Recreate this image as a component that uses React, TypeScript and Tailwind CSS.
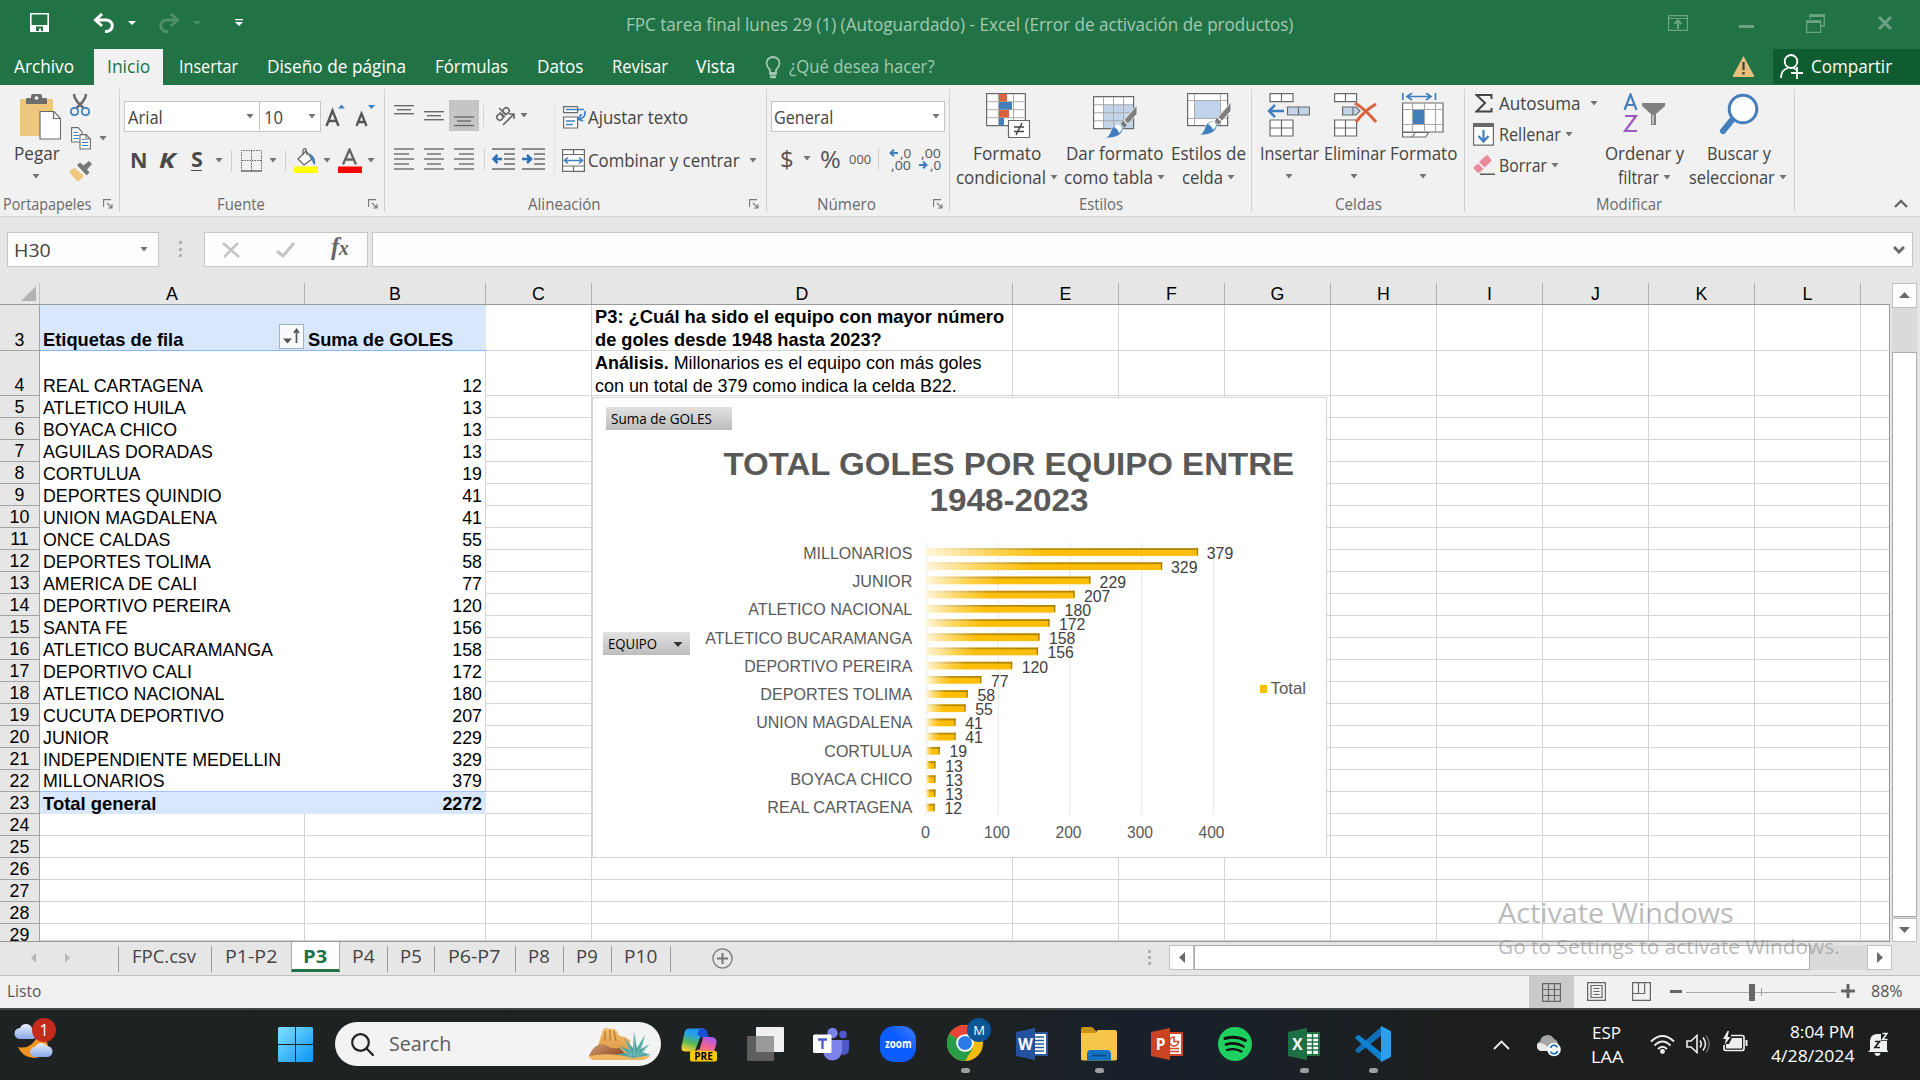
import { useLayoutEffect, useRef, useState } from "react";
import type { ReactNode } from "react";

/* Text condensed horizontally so that it fills the given width. */
function Fit({ w, className = "", children }: { w: number; className?: string; children: ReactNode }) {
  const ref = useRef<HTMLSpanElement>(null);
  const [k, setK] = useState(1);
  useLayoutEffect(() => {
    if (ref.current) setK((w + 1) / ref.current.offsetWidth);
  }, [w]);
  return (
    <span className={`inline-block shrink-0 whitespace-nowrap ${className}`} style={{ width: w }}>
      <span ref={ref} className="inline-block origin-left" style={{ transform: `scaleX(${k})` }}>
        {children}
      </span>
    </span>
  );
}

function Caret({ className = "" }: { className?: string }) {
  return (
    <svg className={`h-[5px] w-[8px] shrink-0 fill-[#737373] ${className}`} viewBox="0 0 8 5">
      <path d="M.5 0h7L4 4.400z" />
    </svg>
  );
}

function Sep({ className = "" }: { className?: string }) {
  return <div className={`w-px shrink-0 bg-[#d2d2d2] ${className}`} />;
}

function TabSep({ className = "" }: { className?: string }) {
  return <div className={`mt-[4px] h-[26px] w-px shrink-0 bg-[#9b9b9b] ${className}`} />;
}

function Launcher({ className = "" }: { className?: string }) {
  return (
    <svg className={`h-[10px] w-[10px] shrink-0 ${className}`} viewBox="0 0 10 10" fill="none" stroke="#777" strokeWidth="1.1">
      <path d="M.6 8V.6H8M4 4l4.500 4.500M9 5v4H5" />
    </svg>
  );
}

/* ---------- title bar and tabs ---------- */

function TitleBar() {
  return (
    <div className="flex h-[49px] shrink-0 bg-[#217346]">
      <div className="flex w-[626px] shrink-0">
        <svg className="ml-[30px] mt-[13px] h-[19px] w-[19px]" viewBox="0 0 19 19" fill="none" stroke="#fff" strokeWidth="1.6">
          <path d="M.8.8h17.400v17.400H.8z" />
          <path d="M1 12h17v6H1z" fill="#fff" stroke="none" />
          <path d="M6 13.500h7V18h-2v-2.500H9V18H6z" fill="#217346" stroke="none" />
        </svg>
        <svg className="ml-[44px] mt-[13px] h-[20px] w-[22px]" viewBox="0 0 22 20" fill="none" stroke="#fff" strokeWidth="3">
          <path d="M2 7h11a6 5.500 0 0 1 0 11.500h-1M9 1 2.500 7 9 13" />
        </svg>
        <svg className="ml-[13px] mt-[21px] h-[4px] w-[8px] fill-white" viewBox="0 0 8 4"><path d="M0 0h8L4 4z" /></svg>
        <svg className="ml-[22px] mt-[13px] h-[20px] w-[22px]" viewBox="0 0 22 20" fill="none" stroke="#4d906b" strokeWidth="3">
          <path d="M20 7H9a6 5.500 0 0 0 0 11.500h1M13 1l6.500 6L13 13" />
        </svg>
        <svg className="ml-[13px] mt-[21px] h-[4px] w-[8px] fill-[#4d906b]" viewBox="0 0 8 4"><path d="M0 0h8L4 4z" /></svg>
        <svg className="ml-[34px] mt-[19px] h-[7px] w-[8px] fill-white" viewBox="0 0 8 7"><path d="M0 0h8v1.200H0zM0 3h8L4 7z" /></svg>
      </div>
      <Fit w={666} className="text-[17.5px] leading-[48px] text-[#a3c9b2]">
        FPC tarea final lunes 29 (1) (Autoguardado) - Excel (Error de activación de productos)
      </Fit>
      <svg className="ml-[376px] mt-[15px] h-[16px] w-[20px]" viewBox="0 0 20 16" fill="none" stroke="#6ba384" strokeWidth="1.2">
        <path d="M.6.6h18.800v14.800H.6zM.6 3.500h18.800" /><path d="M10 14V6M6.500 9 10 5.500 13.500 9" strokeWidth="2" />
      </svg>
      <div className="ml-[51px] mt-[25px] h-[3px] w-[15px] bg-[#6ba384]" />
      <svg className="ml-[52px] mt-[14px] h-[19px] w-[19px]" viewBox="0 0 19 19" fill="none" stroke="#6ba384" strokeWidth="1.3">
        <path d="M4 5V1h14.300v11H15M.7 7h14v11.300H.7z" /><path d="M4 1.800h14.500M.7 7.700h14" strokeWidth="2.400" />
      </svg>
      <svg className="ml-[53px] mt-[16px] h-[14px] w-[14px]" viewBox="0 0 14 14" stroke="#6ba384" strokeWidth="3">
        <path d="m1 1 12 12M13 1 1 13" />
      </svg>
    </div>
  );
}

function Tabs() {
  const t = "text-[17.5px] leading-[35px] text-white";
  return (
    <div className="flex h-[36px] shrink-0 bg-[#217346]">
      <Fit w={59} className={`${t} ml-[14px]`}>Archivo</Fit>
      <div className="ml-[21px] w-[69px] bg-[#f1f1f1] pl-[13px] text-[17.5px] leading-[35px] text-[#217346]">
        <Fit w={42}>Inicio</Fit>
      </div>
      <Fit w={58} className={`${t} ml-[16px]`}>Insertar</Fit>
      <Fit w={138} className={`${t} ml-[30px]`}>Diseño de página</Fit>
      <Fit w={72} className={`${t} ml-[30px]`}>Fórmulas</Fit>
      <Fit w={46} className={`${t} ml-[30px]`}>Datos</Fit>
      <Fit w={55} className={`${t} ml-[29px]`}>Revisar</Fit>
      <Fit w={38} className={`${t} ml-[29px]`}>Vista</Fit>
      <svg className="ml-[31px] mt-[7px] h-[23px] w-[16px]" viewBox="0 0 16 23" fill="none" stroke="#a3c9b2" strokeWidth="1.8">
        <path d="M5 17v-3C3.500 12 1.500 10.500 1.500 7a6.500 6 0 0 1 13 0c0 3.500-2 5-3.500 7v3z" /><path d="M4.500 18h7M5 21h6" strokeWidth="2.500" />
      </svg>
      <Fit w={145} className="ml-[8px] text-[17.5px] leading-[35px] text-[#a3c9b2]">¿Qué desea hacer?</Fit>
      <svg className="ml-[798px] mt-[6px] h-[23px] w-[23px]" viewBox="0 0 23 23">
        <path d="M11.500 1 22 20.500q.5 1.500-1 1.500H2q-1.500 0-1-1.500z" fill="#e9bf7c" /><path d="M11.500 7v8M11.500 17v2.500" stroke="#444" strokeWidth="2.300" />
      </svg>
      <div className="ml-[18px] flex h-[35px] flex-1 bg-[#0e5c2f]">
        <svg className="ml-[7px] mt-[5px] h-[25px] w-[23px]" viewBox="0 0 23 25" fill="none" stroke="#fff" strokeWidth="1.8">
          <ellipse cx="11" cy="7.500" rx="6.300" ry="6.500" /><path d="M1 24c0-6 3-9 7-10M13 14q2 .5 3 2M11 19h12M17 13v12" />
        </svg>
        <Fit w={80} className={`${t} ml-[8px]`}>Compartir</Fit>
      </div>
    </div>
  );
}

/* ---------- ribbon ---------- */

const label = "text-[15.5px] leading-[20px] text-[#6a6a6a]";
const txt = "text-[17.5px] leading-[24px] text-[#444]";

function Lines({ ws, ys, className = "" }: { ws: number[][]; ys: number[]; className?: string }) {
  return (
    <svg className={`h-[22px] w-[21px] shrink-0 ${className}`} viewBox="0 0 21 22" stroke="#6a6a6a" strokeWidth="1.400">
      {ys.map((y, i) => (
        <path key={y} d={`M${ws[i % ws.length][0]} ${y}H${ws[i % ws.length][1]}`} />
      ))}
    </svg>
  );
}

function Clipboard() {
  return (
    <div className="flex w-[119px] shrink-0 flex-col">
      <div className="flex h-[109px]">
        <div className="flex w-[64px] flex-col">
          <svg className="ml-[20px] mt-[9px] h-[46px] w-[41px] shrink-0" viewBox="0 0 41 46">
            <rect x="0" y="5" width="33" height="37" rx="1" fill="#eec67e" />
            <path d="M6 10V5q0-1 1-1h4V2q0-2 2-2h7q2 0 2 2v2h4q1 0 1 1v5z" fill="#6d6d6d" /><circle cx="16.500" cy="4" r="1.800" fill="#fff" />
            <path d="M20 17.500h14l6.500 7V45H20z" fill="#fff" stroke="#6a6a6a" strokeWidth="1.200" /><path d="M33.500 17.500v7h7" fill="none" stroke="#6a6a6a" strokeWidth="1.200" />
          </svg>
          <Fit w={45} className={`${txt} ml-[14px] mt-[1px]`}>Pegar</Fit>
          <Caret className="ml-[32px] mt-[9px]" />
        </div>
        <div className="flex flex-col pl-[5px]">
          <svg className="ml-[1px] mt-[9px] h-[23px] w-[20px]" viewBox="0 0 20 23" fill="none">
            <path d="M4 0c0 5 4 9 9.500 14M16 0c0 5-4 9-9.500 14" stroke="#6a6a6a" strokeWidth="2.400" />
            <circle cx="4.500" cy="17.500" r="3.700" stroke="#3f7fbf" strokeWidth="1.800" /><circle cx="15.500" cy="17.500" r="3.700" stroke="#3f7fbf" strokeWidth="1.800" />
          </svg>
          <div className="mt-[10px] flex items-center">
            <svg className="ml-[2px] h-[23px] w-[20px]" viewBox="0 0 20 23" fill="#fff" stroke="#6a6a6a" strokeWidth="1.100">
              <path d="M.6.600h6.500L11 5v10H.6z" /><path d="M2.500 5.500H7M2.500 8.500H8M2.500 11.500H8" stroke="#3f7fbf" />
              <path d="M9 7.600h6l4.400 4.400v10H9z" /><path d="M15 7.600V12h4.400" fill="none" /><path d="M11 12.500h3M11 15.500h6.500M11 18.500h6.500" stroke="#3f7fbf" />
            </svg>
            <Caret className="ml-[8px]" />
          </div>
          <svg className="mt-[11px] h-[21px] w-[23px]" viewBox="0 0 23 21">
            <path d="m0 10 5.500-3L15 15l-5.500 5.500Q4 17 0 10z" fill="#eec67e" /><path d="m8 4 3-2.500 3.500 3L20 0l3 3-5 5.500 2.500 3-3 3z" fill="#777" /><path d="m6.500 5.500 10 9" stroke="#f1f1f1" strokeWidth="1.300" />
          </svg>
        </div>
      </div>
      <div className="flex items-center pl-[3px]">
        <Fit w={87} className={label}>Portapapeles</Fit>
        <Launcher className="ml-[13px]" />
      </div>
    </div>
  );
}

const combo = "flex h-[31px] shrink-0 items-center border border-[#c6c6c6] bg-white text-[17.5px] text-[#444]";

function FontGroup() {
  return (
    <div className="flex w-[264px] shrink-0 flex-col">
      <div className="mt-[16px] flex h-[31px] pl-[4px]">
        <div className={`${combo} w-[136px] pl-[3px]`}><Fit w={34} className="pt-[2px]">Arial</Fit><Caret className="ml-[84px]" /></div>
        <div className={`${combo} -ml-px w-[62px] pl-[4px]`}><Fit w={18} className="pt-[2px]">10</Fit><Caret className="ml-[26px]" /></div>
        <svg className="ml-[4px] mt-[3px] h-[24px] w-[22px]" viewBox="0 0 22 24"><path d="M13 4.500 16.500.5 20 4.500z" fill="#3f7fbf" />
          <path d="m1.500 22 6-15.500 6 15.500M3.500 17h8" fill="none" stroke="#555" strokeWidth="2.400" /></svg>
        <svg className="ml-[8px] mt-[3px] h-[24px] w-[22px]" viewBox="0 0 22 24"><path d="M13 1 16.500 5 20 1z" fill="#3f7fbf" />
          <path d="m1.500 22 5-12.500 5 12.500M3.500 18h6" fill="none" stroke="#555" strokeWidth="2.300" /></svg>
      </div>
      <div className="mt-[10px] flex h-[37px] items-center text-[21.500px] font-bold leading-[30px] text-[#4a4a4a]">
        <Fit w={16} className="-mt-[2px] ml-[10px]">N</Fit>
        <Fit w={15} className="-mt-[2px] ml-[13px] italic">K</Fit>
        <div className="-mt-[2px] ml-[17px] flex h-[22px] items-center border-b-[1.500px] border-[#4a4a4a]"><Fit w={11}>S</Fit></div>
        <Caret className="ml-[13px]" />
        <Sep className="ml-[8px] h-[22px]" />
        <svg className="ml-[9px] h-[22px] w-[21px]" viewBox="0 0 21 22" fill="none" stroke="#666"><path d="M.5 21V.5h20V21M10.500 1v20M1 10.500h19" strokeDasharray="1.500 1" /><path d="M0 21h21" strokeWidth="1.500" /></svg>
        <Caret className="ml-[7px]" />
        <Sep className="ml-[8px] h-[22px]" />
        <svg className="ml-[8px] h-[25px] w-[24px]" viewBox="0 0 24 25"><path d="m4 11 8-8 6 8-8 6z" fill="#fff" stroke="#666" strokeWidth="1.300" /><path d="M9 7V3q0-3 3-2l1 6" fill="none" stroke="#666" strokeWidth="1.300" /><path d="M15 5q7 3 6 12-3-2-3-6z" fill="#3f7fbf" /><path d="M0 18.500h24V25H0z" fill="#ff0" /></svg>
        <Caret className="ml-[5px]" />
        <svg className="ml-[7px] h-[25px] w-[24px]" viewBox="0 0 24 25"><path d="m5 16.500 6.500-15 6.500 15M7 11.500h9" fill="none" stroke="#666" strokeWidth="2.300" /><path d="M0 18.500h24V25H0z" fill="red" /></svg>
        <Caret className="ml-[5px]" />
      </div>
      <div className="mt-[15px] flex items-center pl-[97px]">
        <Fit w={47} className={label}>Fuente</Fit>
        <Launcher className="ml-[104px]" />
      </div>
    </div>
  );
}

function AlignGroup() {
  return (
    <div className="flex w-[381px] shrink-0 flex-col">
      <div className="flex h-[109px]">
        <div className="flex w-[169px] flex-col">
          <div className="mt-[15px] flex h-[31px] items-center">
            <Lines className="ml-[9px]" ws={[[0, 20], [3, 17]]} ys={[0.7, 4.700, 8.700]} />
            <Lines className="ml-[9px]" ws={[[0, 20], [3, 17]]} ys={[6.700, 10.700, 14.700]} />
            <div className="ml-[4px] flex h-[31px] w-[30px] items-center bg-[#c5c5c5] pl-[5px]">
              <Lines ws={[[0, 20], [3, 17]]} ys={[12, 16, 20.500]} />
            </div>
            <Sep className="ml-[4px] h-[22px]" />
            <svg className="ml-[11px] h-[20px] w-[20px]" viewBox="0 0 20 20" fill="none" stroke="#666" strokeWidth="1.600">
              <g transform="rotate(-45 8 8)"><circle cx="3.500" cy="8" r="3" /><path d="M7 4.500v7M9.500 1v10" /><circle cx="12.500" cy="8" r="3" /></g>
              <path d="m8 19 10.500-10.500M14 8h5v5" />
            </svg>
            <Caret className="ml-[5px]" />
          </div>
          <div className="mt-[17px] flex h-[22px] items-center">
            <Lines className="ml-[9px]" ws={[[0, 20], [0, 15]]} ys={[1, 6, 11, 16, 21]} />
            <Lines className="ml-[9px]" ws={[[0, 20], [3, 17]]} ys={[1, 6, 11, 16, 21]} />
            <Lines className="ml-[9px]" ws={[[0, 20], [5, 20]]} ys={[1, 6, 11, 16, 21]} />
            <Sep className="ml-[9px] h-[22px]" />
            <svg className="ml-[7px] h-[22px] w-[23px]" viewBox="0 0 23 22" stroke="#6a6a6a" strokeWidth="1.300" fill="none"><path d="M0 1h23M12 6h11M12 11h11M12 16h11M0 21h23" /><path d="M10 11H2M5.500 7 1.500 11l4 4" stroke="#2f6fb5" strokeWidth="2.600" /></svg>
            <svg className="ml-[7px] h-[22px] w-[23px]" viewBox="0 0 23 22" stroke="#6a6a6a" strokeWidth="1.300" fill="none"><path d="M0 1h23M12 6h11M12 11h11M12 16h11M0 21h23" /><path d="M0 11h8M5 7l4 4-4 4" stroke="#2f6fb5" strokeWidth="2.600" /></svg>
          </div>
        </div>
        <div className="mt-[17px] h-[73px] w-px bg-[#e2e2e2]" />
        <div className="flex flex-col">
          <div className="mt-[20px] flex h-[24px] items-center">
            <svg className="ml-[8px] h-[23px] w-[24px]" viewBox="0 0 24 23" fill="none" stroke="#6a6a6a" strokeWidth="1.200"><path d="M.6.600h14v6H.6zM.6 11h14v11H.6z" fill="#fff" /><path d="M3 3.500h18M3 15h9M3 18.500h7" stroke="#3f7fbf" strokeWidth="1.500" /><path d="M22 5q1 7-6 8M18.500 8 15 13l5 2" stroke="#3f7fbf" strokeWidth="1.800" /></svg>
            <Fit w={99} className={`${txt} -mt-px ml-px`}>Ajustar texto</Fit>
          </div>
          <div className="mt-[19px] flex h-[24px] items-center">
            <svg className="ml-[7px] h-[23px] w-[23px]" viewBox="0 0 23 23" fill="#fff" stroke="#6a6a6a" strokeWidth="1.200"><path d="M.6.600h21.800v21.800H.6zM.6 5.500h21.800M.6 17h21.800M11.500.6v5M11.500 17v5" /><path d="M3 11.500h17M6 8.500l-3.500 3 3.500 3M17 8.500l3.500 3-3.500 3" fill="none" stroke="#3f7fbf" strokeWidth="1.600" /></svg>
            <Fit w={151} className={`${txt} ml-[3px]`}>Combinar y centrar</Fit>
            <Caret className="ml-[10px]" />
          </div>
        </div>
      </div>
      <div className="flex items-center pl-[143px]">
        <Fit w={72} className={label}>Alineación</Fit>
        <Launcher className="ml-[149px]" />
      </div>
    </div>
  );
}

function NumberGroup() {
  return (
    <div className="flex w-[182px] shrink-0 flex-col">
      <div className="mt-[16px] flex pl-[4px]">
        <div className={`${combo} w-[174px] pl-[2px]`}><Fit w={58} className="pt-[2px]">General</Fit><Caret className="ml-[100px]" /></div>
      </div>
      <div className="mt-[11px] flex h-[31px] items-center text-[#555]">
        <Fit w={13} className="ml-[13px] text-[24px] leading-[30px]">$</Fit>
        <Caret className="ml-[10px]" />
        <Fit w={20} className="ml-[9px] text-[24px] leading-[30px]">%</Fit>
        <Fit w={21} className="ml-[9px] text-[13.500px] leading-[28px]">000</Fit>
        <Sep className="ml-[8px] h-[22px]" />
        <div className="ml-[8px] flex w-[23px] flex-col items-end text-[13.500px] leading-[12px]">
          <div className="flex items-center"><svg className="mr-[2px] h-[8px] w-[9px]" viewBox="0 0 9 8" fill="none" stroke="#3f7fbf" strokeWidth="2"><path d="M9 4H2M5 .7 1.500 4 5 7.300" /></svg><Fit w={10}>,0</Fit></div>
          <Fit w={19}>,00</Fit>
        </div>
        <div className="ml-[7px] flex w-[23px] flex-col items-end text-[13.500px] leading-[12px]">
          <Fit w={19}>,00</Fit>
          <div className="flex items-center"><svg className="mr-[2px] h-[8px] w-[9px]" viewBox="0 0 9 8" fill="none" stroke="#3f7fbf" strokeWidth="2"><path d="M0 4h7M4 .7 7.500 4 4 7.300" /></svg><Fit w={10}>,0</Fit></div>
        </div>
      </div>
      <div className="mt-[20px] flex items-center pl-[50px]">
        <Fit w={58} className={label}>Número</Fit>
        <Launcher className="ml-[58px]" />
      </div>
    </div>
  );
}

function Big({ box, icon, a, aw, b, bw }: { box: string; icon: ReactNode; a: string; aw: number; b?: string; bw?: number }) {
  return (
    <div className={`flex shrink-0 flex-col items-center ${box}`}>
      <div className="mt-[8px] flex h-[48px] items-start">{icon}</div>
      <Fit w={aw} className={txt}>{a}</Fit>
      <div className="flex h-[24px] items-center gap-[5px]">
        {b && <Fit w={bw || 0} className={txt}>{b}</Fit>}
        <Caret className={b ? "" : "mb-[2px]"} />
      </div>
    </div>
  );
}

const Brush = () => (
  <>
    <path d="M44 9v9l-9 10-4-4z" fill="#808080" stroke="#f1f1f1" /><path d="m30 25 4 4-3 3-4-3z" fill="#777" />
    <path d="M12 42c5-2 5-6 7-10 3-5 10-5 11-1 1 6-6 12-18 11z" fill="#3f7fbf" stroke="#f1f1f1" strokeWidth=".8" /><path d="M21 31c3-4 8-3 8 1q0 3-3 5-1-4-5-6z" fill="#fff" />
  </>
);

function StylesGroup() {
  return (
    <div className="flex w-[301px] shrink-0 flex-col">
      <div className="flex h-[109px] pl-[2px]">
        <Big box="w-[109px]" a="Formato" aw={67} b="condicional" bw={89} icon={
          <svg className="ml-[4px] h-[46px] w-[45px]" viewBox="0 0 45 46" fill="none">
            <path d="M.6.600h38.800v32H.6z" fill="#fff" stroke="#6a6a6a" strokeWidth="1.200" />
            <path d="M1 8.700h38M1 16.700h38M1 24.700h38M12.500 1v31M27.500 1v31" stroke="#aaa" />
            <path d="M13 1h8v7.500h-8zM13 17h10v7.500H13z" fill="#d9623f" /><path d="M13 9h13v7.500H13zM13 25h5v7.500h-5z" fill="#457fbb" />
            <path d="M22.500 27.500h21v17h-21z" fill="#fff" stroke="#6a6a6a" strokeWidth="1.200" /><path d="M28 34h10M28 38.500h10M36 30l-6 12" stroke="#444" strokeWidth="1.500" />
          </svg>} />
        <Big box="w-[106px]" a="Dar formato" aw={96} b="como tabla" bw={88} icon={
          <svg className="ml-[3px] mt-[3px] h-[44px] w-[45px]" viewBox="0 0 45 44" fill="none">
            <path d="M.6.600h40v32H.6z" fill="#fff" stroke="#6a6a6a" strokeWidth="1.200" /><path d="M11 9h29v23H11z" fill="#c1d4ea" />
            <path d="M1 8.700h39M1 16.700h39M1 24.700h39M10.500 1v31M20.500 1v31M30.500 1v31" stroke="#aaa" /><Brush />
          </svg>} />
        <Big box="w-[82px]" a="Estilos de" aw={74} b="celda" bw={40} icon={
          <svg className="ml-[2px] h-[44px] w-[45px]" viewBox="0 0 45 44" fill="none">
            <path d="M.6.600h40v32H.6z" fill="#fff" stroke="#6a6a6a" strokeWidth="1.200" />
            <path d="M1 7.500h39M1 25.500h39M7.500 1v31M33.500 1v31" stroke="#aaa" /><path d="M8 8h25v17H8z" fill="#bfd3ea" /><Brush />
          </svg>} />
      </div>
      <Fit w={43} className={`${label} ml-[129px]`}>Estilos</Fit>
    </div>
  );
}

function CellsGroup() {
  return (
    <div className="flex w-[212px] shrink-0 flex-col">
      <div className="flex h-[109px] pl-[4px]">
        <Big box="w-[65px]" a="Insertar" aw={58} icon={
          <svg className="h-[45px] w-[43px]" viewBox="0 0 43 45" fill="#fff" stroke="#6a6a6a" strokeWidth="1.200">
            <path d="M3 .6h23v8H3zM14.500.6v8M3 27h23v16H3zM3 35h23M14.500 27v16" /><path d="M20.500 14h22v8h-22zM31.500 14v8" fill="#c1d4ea" />
            <path d="M17 18H2M8 12l-6 6 6 6" fill="none" stroke="#3f7fbf" strokeWidth="2.500" />
          </svg>} />
        <Big box="w-[66px]" a="Eliminar" aw={61} icon={
          <svg className="ml-[2px] h-[45px] w-[43px]" viewBox="0 0 43 45" fill="#fff" stroke="#6a6a6a" strokeWidth="1.200">
            <path d="M.6.600h22v8H.6zM11.500.6v8M.6 27h22v16H.6zM.6 35h22M11.500 27v16" /><path d="M8.600 14H22l4 4-4 4H8.600zM19 14v8" fill="#c1d4ea" />
            <path d="M21 10q10 6 21 19M42 11Q30 18 22 29" fill="none" stroke="#d9623f" strokeWidth="3" />
          </svg>} />
        <Big box="w-[72px]" a="Formato" aw={66} icon={
          <svg className="h-[45px] w-[42px]" viewBox="0 0 42 45" fill="#fff" stroke="#6a6a6a" strokeWidth="1.200">
            <path d="M.6 10h40.400v29H.6zM.6 39.500h26l-3 4.500H.6zM10 44l3-4" /><path d="M1 16.500h40M1 31.500h40M10.500 10v29M22.500 10v29M33.500 10v29" stroke="#aaa" />
            <path d="M11 17h11v14H11z" fill="#457fbb" stroke="none" /><path d="M.8 0v7M33.500 0v7M5 3.500h24M10 0 5 3.500 10 7M24 0l5 3.500L24 7" fill="none" stroke="#3f7fbf" strokeWidth="1.700" />
          </svg>} />
      </div>
      <Fit w={46} className={`${label} ml-[83px]`}>Celdas</Fit>
    </div>
  );
}

function EditGroup() {
  return (
    <div className="flex w-[329px] shrink-0 flex-col">
      <div className="flex h-[109px]">
        <div className="flex w-[137px] flex-col pl-[7px] pt-[6px]">
          <div className="flex h-[24px] items-center">
            <svg className="ml-[3px] h-[19px] w-[18px]" viewBox="0 0 18 19" fill="none" stroke="#444" strokeWidth="2"><path d="M16.500 5V1H1.500L10 9 1.500 17.500H16.500V14" /></svg>
            <Fit w={81} className={`${txt} ml-[6px]`}>Autosuma</Fit><Caret className="ml-[10px]" />
          </div>
          <div className="mt-[7px] flex h-[24px] items-center">
            <svg className="ml-[1px] h-[23px] w-[21px]" viewBox="0 0 21 23" fill="none"><path d="M.6.600h19.800v21.500H.6z" fill="#fff" stroke="#6a6a6a" strokeWidth="1.200" /><path d="M0 0h21v4H0z" fill="#6a6a6a" /><path d="M10.500 7v11M5.500 13l5 5.500 5-5.500" stroke="#3f7fbf" strokeWidth="2.200" /></svg>
            <Fit w={61} className={`${txt} ml-[5px]`}>Rellenar</Fit><Caret className="ml-[5px]" />
          </div>
          <div className="mt-[7px] flex h-[24px] items-center">
            <svg className="ml-[1px] h-[20px] w-[22px]" viewBox="0 0 22 20" fill="none"><path d="m6 7 7-6.500q1-.5 2 0l3 4q1 1 0 2l-6.500 6z" fill="#e98a9b" /><path d="m5 8.500 5.500 5.500-4 3.500q-1 .5-2 0L1 14q-1-1 0-2z" fill="#e98a9b" /><path d="M7 19.200h15" stroke="#444" strokeWidth="1.300" /></svg>
            <Fit w={47} className={`${txt} ml-[4px]`}>Borrar</Fit><Caret className="ml-[5px]" />
          </div>
        </div>
        <Big box="w-[84px]" a="Ordenar y" aw={78} b="filtrar" bw={40} icon={
          <svg className="h-[42px] w-[42px]" viewBox="0 0 42 42" fill="none">
            <path d="M1.500 17 7.500 1.500 13.500 17M3.500 12h8" stroke="#457fbb" strokeWidth="2.200" /><path d="M2 23h11L2 38h12" stroke="#9b59c0" strokeWidth="2.200" />
            <path d="M19 10h23v3l-9 8v11h-5V21l-9-8z" fill="#808080" /><path d="M30 22v9" stroke="#fff" />
          </svg>} />
        <Big box="w-[104px]" a="Buscar y" aw={63} b="seleccionar" bw={85} icon={
          <svg className="ml-[2px] h-[42px] w-[42px]" viewBox="0 0 42 42" fill="none" stroke="#457fbb">
            <path d="M14 27 5 38" strokeWidth="6" strokeLinecap="round" /><circle cx="25" cy="16" r="13.800" fill="#fff" strokeWidth="3" />
          </svg>} />
      </div>
      <Fit w={65} className={`${label} ml-[131px]`}>Modificar</Fit>
    </div>
  );
}

function Ribbon() {
  return (
    <div className="flex h-[132px] shrink-0 border-b border-[#d2d2d2] bg-[#f1f1f1]">
      <Clipboard /><Sep className="my-[4px]" />
      <FontGroup /><Sep className="my-[4px]" />
      <AlignGroup /><Sep className="my-[4px]" />
      <NumberGroup /><Sep className="my-[4px]" />
      <StylesGroup /><Sep className="my-[4px]" />
      <CellsGroup /><Sep className="my-[4px]" />
      <EditGroup /><Sep className="my-[4px]" />
      <svg className="ml-[99px] mt-[114px] h-[9px] w-[14px]" viewBox="0 0 14 9" fill="none" stroke="#666" strokeWidth="2.400"><path d="m1 8 6-6 6 6" /></svg>
    </div>
  );
}

function FormulaBar() {
  return (
    <div className="flex h-[66px] shrink-0 bg-[#e6e6e6] pt-[15px]">
      <div className="ml-[7px] flex h-[35px] w-[152px] items-center border border-[#c6c6c6] bg-[#fdfdfd] text-[18.500px] text-[#444]">
        <Fit w={36} className="ml-[6px]">H30</Fit><Caret className="ml-[90px]" />
      </div>
      <div className="ml-[20px] mt-[9px] flex h-[16px] w-[3px] flex-col justify-between">
        <i className="h-[3px] bg-[#b0b0b0]" /><i className="h-[3px] bg-[#b0b0b0]" /><i className="h-[3px] bg-[#b0b0b0]" />
      </div>
      <div className="ml-[22px] flex h-[35px] w-[164px] items-center border border-[#c6c6c6] bg-[#fdfdfd]">
        <svg className="ml-[17px] h-[16px] w-[18px]" viewBox="0 0 18 16" stroke="#c4c4c4" strokeWidth="2.500"><path d="m1 1 16 14M16 1 2 15" /></svg>
        <svg className="ml-[36px] h-[16px] w-[20px]" viewBox="0 0 20 16" fill="none" stroke="#c4c4c4" strokeWidth="3"><path d="m1 9 6 5L18 1" /></svg>
        <span className="-mt-[4px] ml-[35px] font-['Liberation_Serif',serif] text-[25px] font-bold italic leading-[30px] tracking-tight text-[#666]">f<span className="text-[20px]">x</span></span>
      </div>
      <div className="ml-[4px] flex h-[35px] w-[1541px] items-center justify-end border border-[#c6c6c6] bg-[#fdfdfd] pr-[7px]">
        <svg className="h-[8px] w-[12px]" viewBox="0 0 12 8" fill="none" stroke="#6a6a6a" strokeWidth="3"><path d="m1 1 5 5 5-5" /></svg>
      </div>
    </div>
  );
}

/* ---------- sheet ---------- */

const colWidths = ["w-[265px]", "w-[181px]", "w-[106px]", "w-[421px]", "w-[106px]", "w-[106px]", "w-[106px]", "w-[106px]", "w-[106px]", "w-[106px]", "w-[106px]", "w-[106px]"];
const colNames = ["A", "B", "C", "D", "E", "F", "G", "H", "I", "J", "K", "L"];

const teams: [string, number][] = [
  ["REAL CARTAGENA", 12], ["ATLETICO HUILA", 13], ["BOYACA CHICO", 13], ["AGUILAS DORADAS", 13], ["CORTULUA", 19],
  ["DEPORTES QUINDIO", 41], ["UNION MAGDALENA", 41], ["ONCE CALDAS", 55], ["DEPORTES TOLIMA", 58], ["AMERICA DE CALI", 77],
  ["DEPORTIVO PEREIRA", 120], ["SANTA FE", 156], ["ATLETICO BUCARAMANGA", 158], ["DEPORTIVO CALI", 172], ["ATLETICO NACIONAL", 180],
  ["CUCUTA DEPORTIVO", 207], ["JUNIOR", 229], ["INDEPENDIENTE MEDELLIN", 329], ["MILLONARIOS", 379],
];

function SheetRow({ n }: { n: number }) {
  const h = n === 3 ? "h-[46px]" : n === 4 ? "h-[45px]" : n === 29 ? "h-[17px]" : "h-[22px]";
  const data = n >= 4 && n <= 22 ? teams[n - 4] : null;
  const fill = n === 3 || n === 23;
  const base = "shrink-0 border-r border-b border-[#d4d4d4]";
  const ab = fill
    ? `flex items-end shrink-0 bg-[#d9e7fd] font-bold ${n === 3 ? "border-b border-[#8db4f5]" : ""}`
    : data
      ? `flex items-end shrink-0 ${n === 22 ? "border-b border-[#a5c3f7]" : ""}`
      : base;
  const head = n === 29 ? "items-start leading-[23px]" : "items-end border-b leading-[19px]";
  return (
    <div className={`flex shrink-0 ${h}`}>
      <div className={`flex w-[40px] shrink-0 justify-center border-r border-[#a3a3a3] bg-[#e6e6e6] ${head}`}>{n}</div>
      <div className={`${colWidths[0]} ${ab} pl-[3px] leading-[20px]`}>
        {n === 3 && (
          <>
            <Fit w={139}>Etiquetas de fila</Fit>
            <div className="mb-px ml-[97px] flex h-[25px] w-[25px] shrink-0 items-center border border-[#a6b0bd] bg-[#f8fafc]">
              <svg className="h-[20px] w-[23px]" viewBox="0 0 23 20" fill="none"><path d="M3 11.500h9l-4.500 5z" fill="#555" /><path d="M16.500 3v13M14 6l2.500-3.500L19 6" stroke="#555" strokeWidth="1.700" /></svg>
            </div>
          </>
        )}
        {data && <span>{data[0]}</span>}
        {n === 23 && <Fit w={112}>Total general</Fit>}
      </div>
      <div className={`${colWidths[1]} ${ab} ${data ? "border-r border-r-[#d4d4d4]" : ""} ${n === 3 ? "pl-[3px]" : n === 23 ? "justify-end pr-[4px]" : "justify-end pr-[3px]"} leading-[20px]`}>
        {n === 3 && <Fit w={144}>Suma de GOLES</Fit>}
        {data && data[1]}
        {n === 23 && "2272"}
      </div>
      <div className={`${colWidths[2]} ${base}`} />
      <div className={`${colWidths[3]} ${base} pl-[3px] pt-px leading-[23px]`}>
        {n === 3 && (
          <div className="-mb-[4px] font-bold">
            <Fit w={408}>P3: ¿Cuál ha sido el equipo con mayor número</Fit><br />
            <Fit w={286}>de goles desde 1948 hasta 2023?</Fit>
          </div>
        )}
        {n === 4 && (
          <div className="-mb-[4px]">
            <Fit w={386}><b>Análisis.</b> Millonarios es el equipo con más goles</Fit><br />
            <Fit w={361}>con un total de 379 como indica la celda B22.</Fit>
          </div>
        )}
      </div>
      {colWidths.slice(4).map((w, i) => <div key={i} className={`${w} ${base}`} />)}
      <div className="flex-1 border-b border-[#d4d4d4]" />
    </div>
  );
}

const order = [...teams].reverse();
const catWidths: Record<string, number> = {
  "MILLONARIOS": 109, "JUNIOR": 60, "ATLETICO NACIONAL": 164, "ATLETICO BUCARAMANGA": 207, "DEPORTIVO PEREIRA": 168,
  "DEPORTES TOLIMA": 152, "UNION MAGDALENA": 156, "CORTULUA": 88, "BOYACA CHICO": 122, "REAL CARTAGENA": 145,
};

function Chart() {
  const u = 0.7175;
  return (
    <div className="absolute left-[592px] top-[114px] h-[461px] w-[735px] border border-[#d6d6d6] bg-white">
      <svg className="block h-[459px] w-[733px]" viewBox="593 398 733 459" fontFamily="'Liberation Sans', Arial, sans-serif">
        <defs>
          <linearGradient id="bar" x1="0" x2="1"><stop offset="0" stopColor="#fff7dc" /><stop offset=".12" stopColor="#ffe49a" /><stop offset=".25" stopColor="#ffd452" /><stop offset=".45" stopColor="#fdbe0a" /><stop offset="1" stopColor="#fdbe0a" /></linearGradient>
          <linearGradient id="edge" x1="0" x2="1"><stop offset="0" stopColor="#fff3cf" /><stop offset=".45" stopColor="#c09010" /><stop offset="1" stopColor="#b08200" /></linearGradient>
          <linearGradient id="btn" x2="0" y2="1"><stop offset="0" stopColor="#e2e2e2" /><stop offset=".5" stopColor="#d0d0d0" /><stop offset="1" stopColor="#bcbcbc" /></linearGradient>
        </defs>
        <rect x="606" y="407" width="126" height="23" fill="url(#btn)" />
        <text x="611" y="424" fontFamily="'Open Sans', sans-serif" fontSize="14.500" textLength="101" lengthAdjust="spacingAndGlyphs">Suma de GOLES</text>
        <g fill="#595959" fontWeight="bold" fontSize="32">
          <text x="723.500" y="474.500" textLength="570.500" lengthAdjust="spacingAndGlyphs">TOTAL GOLES POR EQUIPO ENTRE</text>
          <text x="929.500" y="510.500" textLength="159" lengthAdjust="spacingAndGlyphs">1948-2023</text>
        </g>
        {[0, 100, 200, 300, 400].map((v, i) => (
          <g key={v}>
            <path d={`M${926.500 + v * u} 543v271l-2 2`} fill="none" stroke="#ececec" strokeWidth="1.300" />
            <text x={925.500 + v * 0.715} y="838" fontSize="16.500" fill="#595959" textAnchor="middle" textLength={i ? 26 : 9} lengthAdjust="spacingAndGlyphs">{v}</text>
          </g>
        ))}
        {order.map(([name, v], i) => {
          const y = 548.200 + i * 14.200;
          const w = v * u;
          return (
            <g key={name}>
              <rect x="926" y={y} width={w} height="7.700" fill="url(#bar)" />
              <rect x="926" y={y} width={w} height="1.800" fill="url(#edge)" />
              <path d={`M${925.500 + w} ${y}v7`} stroke="#a87c00" strokeWidth="1.300" />
              <text x={936 + w - v * 0.003} y={559.300 + i * 14.150} fontSize="16.500" fill="#404040" textLength={String(v).length * 8.800} lengthAdjust="spacingAndGlyphs">{v}</text>
              {i % 2 === 0 && <text x={912.300 - catWidths[name]} y={558.800 + i * 14.130} fontSize="16.500" fill="#595959" textLength={catWidths[name]} lengthAdjust="spacingAndGlyphs">{name}</text>}
            </g>
          );
        })}
        <rect x="603" y="632" width="87" height="23" fill="url(#btn)" />
        <text x="608" y="649" fontFamily="'Open Sans', sans-serif" fontSize="14.500" textLength="49" lengthAdjust="spacingAndGlyphs">EQUIPO</text>
        <path d="M673.500 642h9l-4.500 5z" fill="#333" />
        <rect x="1260" y="685" width="7" height="8" fill="#fdbe0a" />
        <text x="1270.500" y="694" fontSize="16.500" fill="#595959" textLength="35.500" lengthAdjust="spacingAndGlyphs">Total</text>
      </svg>
    </div>
  );
}

function Sheet() {
  return (
    <div className="relative flex h-[659px] shrink-0 bg-[#e6e6e6]">
      <div className="flex w-[1890px] shrink-0 flex-col font-['Liberation_Sans',Arial,sans-serif] text-[17.800px] text-black">
        <div className="flex h-[22px] shrink-0 border-b border-[#999] text-center leading-[22px]">
          <div className="flex w-[40px] shrink-0 items-end justify-end border-r border-[#c4c4c4] pb-[3px] pr-[3px]">
            <svg className="h-[15px] w-[15px] fill-[#b3b3b3]" viewBox="0 0 15 15"><path d="M15 0v15H0z" /></svg>
          </div>
          {colNames.map((c, i) => (
            <div key={c} className={`${colWidths[i]} shrink-0 border-r border-[#b0b0b0]`}>{c}</div>
          ))}
        </div>
        <div className="flex h-[637px] flex-col overflow-hidden border-b border-r border-[#999] bg-white">
          {Array.from({ length: 27 }, (_, i) => <SheetRow key={i} n={i + 3} />)}
        </div>
      </div>
      <div className="ml-[2px] flex w-[25px] flex-col bg-[#dadada]">
        <div className="flex h-[25px] items-center justify-center border border-[#c0c0c0] bg-white"><svg className="h-[6px] w-[11px] fill-[#6a6a6a]" viewBox="0 0 11 6"><path d="M0 6h11L5.500 0z" /></svg></div>
        <div className="mt-[44px] h-[566px] border border-[#ababab] bg-white" />
        <div className="mt-px flex h-[24px] items-center justify-center border border-[#c0c0c0] bg-white"><svg className="h-[6px] w-[11px] fill-[#6a6a6a]" viewBox="0 0 11 6"><path d="M0 0h11L5.500 6z" /></svg></div>
      </div>
      <Chart />
    </div>
  );
}

function SheetTabs() {
  const t = "text-[18.500px] leading-[28px] text-[#444]";
  return (
    <div className="flex h-[33px] shrink-0 bg-[#e6e6e6]">
      <svg className="ml-[31px] mt-[11px] h-[10px] w-[5px] fill-[#b8b8b8]" viewBox="0 0 5 10"><path d="M5 0v10L0 5z" /></svg>
      <svg className="ml-[29px] mt-[11px] h-[10px] w-[5px] fill-[#b8b8b8]" viewBox="0 0 5 10"><path d="M0 0v10l5-5z" /></svg>
      <TabSep className="ml-[48px]" />
      <Fit w={63} className={`${t} ml-[13px]`}>FPC.csv</Fit>
      <TabSep className="ml-[16px]" />
      <Fit w={51} className={`${t} ml-[13px]`}>P1-P2</Fit>
      <div className="-mt-px ml-[15px] h-[31px] w-[49px] border-x border-b-[3px] border-x-[#ababab] border-b-[#217346] bg-white pl-[11px] text-[18.500px] font-bold leading-[30px] text-[#217346]"><Fit w={23}>P3</Fit></div>
      <Fit w={22} className={`${t} ml-[12px]`}>P4</Fit>
      <TabSep className="ml-[13px]" />
      <Fit w={21} className={`${t} ml-[12px]`}>P5</Fit>
      <TabSep className="ml-[13px]" />
      <Fit w={51} className={`${t} ml-[13px]`}>P6-P7</Fit>
      <TabSep className="ml-[16px]" />
      <Fit w={21} className={`${t} ml-[12px]`}>P8</Fit>
      <TabSep className="ml-[14px]" />
      <Fit w={21} className={`${t} ml-[12px]`}>P9</Fit>
      <TabSep className="ml-[14px]" />
      <Fit w={32} className={`${t} ml-[12px]`}>P10</Fit>
      <TabSep className="ml-[14px]" />
      <svg className="ml-[41px] mt-[6px] h-[21px] w-[21px]" viewBox="0 0 21 21" fill="none" stroke="#777"><circle cx="10.500" cy="10.500" r="9.600" strokeWidth="1.300" /><path d="M10.500 5v11M5 10.500h11" strokeWidth="2" /></svg>
      <div className="ml-[415px] mt-[8px] flex h-[15px] w-[3px] flex-col justify-between"><i className="h-[3px] bg-[#b0b0b0]" /><i className="h-[3px] bg-[#b0b0b0]" /><i className="h-[3px] bg-[#b0b0b0]" /></div>
      <div className="ml-[18px] mt-[3px] flex h-[25px] w-[723px] bg-[#dadada]">
        <div className="flex w-[25px] items-center justify-center border border-[#c0c0c0] bg-white"><svg className="h-[11px] w-[6px] fill-[#6a6a6a]" viewBox="0 0 6 11"><path d="M6 0v11L0 5.500z" /></svg></div>
        <div className="w-[616px] border border-[#ababab] bg-white" />
        <div className="ml-auto flex w-[25px] items-center justify-center border border-[#c0c0c0] bg-white"><svg className="h-[11px] w-[6px] fill-[#6a6a6a]" viewBox="0 0 6 11"><path d="M0 0v11l6-5.500z" /></svg></div>
      </div>
    </div>
  );
}

function StatusBar() {
  return (
    <div className="flex h-[33px] shrink-0 border-t border-[#c0c0c0] bg-[#f1f1f1] text-[#555]">
      <Fit w={33} className="ml-[7px] text-[15.500px] leading-[31px]">Listo</Fit>
      <div className="ml-[1489px] flex w-[45px] items-center justify-center bg-[#cacaca]">
        <svg className="h-[19px] w-[19px]" viewBox="0 0 19 19" fill="none" stroke="#666" strokeWidth="1.200"><path d="M.6.600h17.800v17.800H.6zM.6 6.500h18M.6 12.500h18M6.500.6v18M12.500.6v18" /></svg>
      </div>
      <svg className="ml-[13px] mt-[6px] h-[19px] w-[19px]" viewBox="0 0 19 19" fill="none" stroke="#666" strokeWidth="1.200"><path d="M.6.600h17.800v17.800H.6zM4 3.500h11v12H4zM6.500 6.500h6M6.500 9.500h6M6.500 12.500h6" /></svg>
      <svg className="ml-[26px] mt-[6px] h-[19px] w-[19px]" viewBox="0 0 19 19" fill="none" stroke="#666" strokeWidth="1.200"><path d="M.6.600h17.800v17.800H.6zM.6 11.500h12v-11M6.500.6v11" /></svg>
      <div className="ml-[19px] mt-[14px] h-[3px] w-[12px] bg-[#666]" />
      <div className="ml-[4px] flex w-[150px] items-center">
        <div className="h-px w-[63px] bg-[#aaa]" /><div className="h-[17px] w-[6px] bg-[#666]" /><div className="h-px w-[6px] bg-[#aaa]" /><div className="h-[8px] w-px bg-[#999]" /><div className="h-px flex-1 bg-[#aaa]" />
      </div>
      <svg className="ml-[5px] mt-[8px] h-[14px] w-[14px]" viewBox="0 0 14 14" stroke="#666" strokeWidth="3"><path d="M7 0v14M0 7h14" /></svg>
      <Fit w={31} className="ml-[16px] text-[15.500px] leading-[31px]">88%</Fit>
    </div>
  );
}

/* ---------- taskbar ---------- */

function AppIcon({ ml, dot, children }: { ml: string; dot?: boolean; children: ReactNode }) {
  return (
    <div className={`flex w-[40px] shrink-0 flex-col items-center ${ml}`}>
      <div className="mt-[10px] flex h-[48px] items-center justify-center">{children}</div>
      {dot && <div className="h-[5px] w-[9px] rounded-full bg-[#9c9fa1]" />}
    </div>
  );
}

function Office({ letter, color, dark, children }: { letter: string; color: string; dark: string; children: ReactNode }) {
  return (
    <svg className="h-[32px] w-[32px]" viewBox="0 0 32 32" fontFamily="'Open Sans', sans-serif">
      <rect x="15" y="4" width="17" height="24" rx="1" fill={color} /><rect x="17" y="6" width="13" height="20" fill="#fff" />
      {children}
      <path d="M0 4 19 0v32L0 28z" fill={dark} /><text x="9.500" y="21.500" fontSize="15.500" fontWeight="bold" fill="#fff" textAnchor="middle">{letter}</text>
    </svg>
  );
}

function Taskbar() {
  return (
    <div className="flex h-[72px] shrink-0 border-t-2 border-[#45484a] bg-linear-to-r from-[#1f2222] from-50% via-[#17202b] via-60% to-[#1d1f1f] to-75%">
      <svg className="ml-[13px] mt-[7px] h-[45px] w-[45px]" viewBox="0 0 45 45">
        <defs><linearGradient id="cl" x2="0" y2="1"><stop stopColor="#e9f1fd" /><stop offset="1" stopColor="#86a8e8" /></linearGradient></defs>
        <path d="M25 18q8 3 10 10 0 12-14 13Q9 40 5 30q14 3 20-12z" fill="#f49420" />
        <path d="M7 22a5.500 5.500 0 0 1 0-11 6.500 6.500 0 0 1 12 0 5.500 5.500 0 0 1 1 11z" fill="url(#cl)" />
        <path d="M22 40a5 5 0 0 1 0-10 7 7 0 0 1 12-1 5.500 5.500 0 0 1 0 11z" fill="url(#cl)" />
        <circle cx="31" cy="13" r="12" fill="#c42b1c" /><text x="31" y="18.500" fontSize="16" fill="#fff" textAnchor="middle" fontFamily="'Open Sans', sans-serif">1</text>
      </svg>
      <svg className="ml-[220px] mt-[17px] h-[35px] w-[35px]" viewBox="0 0 35 35">
        <defs><linearGradient id="win" x2="1" y2="1"><stop stopColor="#7fe0ff" /><stop offset="1" stopColor="#0a95f5" /></linearGradient></defs>
        <path d="M1 0h16v17H0V1zM18 0h16l1 1v16H18zM0 18h17v17H1l-1-1zM18 18h17v16l-1 1H18z" fill="url(#win)" />
      </svg>
      <div className="ml-[22px] mt-[12px] flex h-[44px] w-[326px] items-center rounded-full bg-[#f3f3f3]">
        <svg className="ml-[16px] h-[23px] w-[23px]" viewBox="0 0 23 23" fill="none" stroke="#222" strokeWidth="2.200"><circle cx="9.500" cy="9.500" r="8.300" /><path d="m15.500 15.500 6.500 6.500" strokeLinecap="round" /></svg>
        <Fit w={61} className="ml-[15px] text-[20px] text-[#5c5c5c]">Search</Fit>
        <svg className="ml-[138px] h-[34px] w-[63px]" viewBox="0 0 63 34">
          <defs><linearGradient id="mesa" x2="0" y2="1"><stop stopColor="#f2c071" /><stop offset="1" stopColor="#d98c35" /></linearGradient><linearGradient id="rock" x2="1" y2=".6"><stop stopColor="#d09a72" /><stop offset="1" stopColor="#8f4b25" /></linearGradient></defs>
          <path d="M10 19 15 2.500q1-1.500 3-1.500l5 1 3-.5 3 2.500q1 4 3 5l6 1.500 4 3v9l-8 10H14z" fill="url(#mesa)" />
          <path d="M17 4v10M22 3v11M26 4l2 10" stroke="#b9772f" strokeWidth="1.300" fill="none" />
          <path d="M1 29q3-8 9-11 6-2 11 2 5 2 11 1l8 10H3z" fill="url(#rock)" />
          <path d="M1 29q14-3 30-1t31 1q-2 3-8 4H5q-4-1-4-4z" fill="#efb45e" />
          <path d="M45 31 28 27l12-1-9-7 11 4-6-12 9 10 1-16 3 16 8-13-4 14 9-5-8 8 9 3-12 2z" fill="#4fa6a3" />
          <path d="m44 29-6-14M46 29l1-21M48 29l7-13M44 30l-12-9M49 30l9-7" stroke="#8fcbc6" strokeWidth=".8" />
        </svg>
      </div>
      <AppIcon ml="ml-[18px]">
        <svg className="h-[36px] w-[38px]" viewBox="0 0 38 36">
          <defs>
            <linearGradient id="c1" x1=".6" x2=".3" y2="1"><stop stopColor="#1f8df0" /><stop offset=".3" stopColor="#2aa5e0" /><stop offset=".6" stopColor="#52b65c" /><stop offset="1" stopColor="#f6d02b" /></linearGradient>
            <linearGradient id="c2" x1=".7" x2=".3" y2="1"><stop stopColor="#a45df0" /><stop offset=".55" stopColor="#f0609b" /><stop offset="1" stopColor="#f58a50" /></linearGradient>
          </defs>
          <path d="M9 2.500h15l-1 5-3 4-4 12q-1 2-3 2H5q-4 0-3.500-5l3-14q1-4 4.500-4z" fill="url(#c1)" />
          <path d="M20 2.500h3q3 0 4 3l1.500 5.500h-6q-4 0-5-3z" fill="#1c4fd8" />
          <path d="M25 11h6q6 0 5.500 6L34 26H14q3-1 4-4l3-8q1-3 4-3z" fill="url(#c2)" />
          <path d="M20 12.500h3l-3.500 11h-4z" fill="#1f2222" />
          <rect x="10" y="25" width="27" height="10.500" rx="2" fill="#fcc80b" /><text x="23.500" y="34" fontSize="10" fontWeight="bold" textAnchor="middle" fontFamily="'Open Sans', sans-serif">PRE</text>
        </svg>
      </AppIcon>
      <AppIcon ml="ml-[26px]"><svg className="h-[34px] w-[37px]" viewBox="0 0 37 34"><rect y="9" width="27" height="25" rx="1" fill="#5e5e5e" /><rect x="9" width="28" height="25" rx="1" fill="#f0f0f0" /><path d="M9 9h18v16H9z" fill="#9a9a9a" /></svg></AppIcon>
      <AppIcon ml="ml-[26px]">
        <svg className="h-[34px] w-[36px]" viewBox="0 0 36 34"><circle cx="30" cy="7.500" r="3.800" fill="#5059c9" /><path d="M24 13h11q1 0 1 1v8q0 6-7 6z" fill="#5059c9" /><circle cx="19.500" cy="6" r="5.200" fill="#7b83eb" /><path d="M10 13h19v11q-1 9-9.500 9.500Q11 33 10 24z" fill="#7b83eb" /><rect y="7.500" width="18.500" height="18.500" rx="1.500" fill="#fff" /><path d="M5 12.500h9M9.500 12.500v9.500" stroke="#5059c9" strokeWidth="2.300" /></svg>
      </AppIcon>
      <AppIcon ml="ml-[27px]"><div className="flex h-[36px] w-[36px] items-center justify-center rounded-[14px] bg-linear-to-bl from-[#3e7bff] to-[#0b5cff] to-40% text-[12px] font-bold text-white"><Fit w={26} className="leading-[14px]">zoom</Fit></div></AppIcon>
      <AppIcon ml="ml-[27px]" dot>
        <svg className="-mt-[8px] ml-[8px] h-[44px] w-[44px]" viewBox="0 0 44 44">
          <circle cx="18" cy="25" r="18" fill="#fbbc05" /><path d="M18 25 2.400 16A18 18 0 0 1 33.600 16H18z" fill="#ea4335" /><path d="M18 25 2.400 16A18 18 0 0 0 18 43l8-13z" fill="#2a9d49" /><circle cx="18" cy="25" r="8.800" fill="#fff" /><circle cx="18" cy="25" r="7" fill="#2c7be8" />
          <circle cx="32" cy="12" r="12" fill="#0b5796" /><text x="32" y="16.500" fontSize="13" fill="#fff" textAnchor="middle" fontFamily="'Open Sans', sans-serif">M</text>
        </svg>
      </AppIcon>
      <AppIcon ml="ml-[27px]"><Office letter="W" color="#2b579a" dark="#2353a0"><path d="M17 9h11M17 12.500h11M17 16h11M17 19.500h11M17 23h11" stroke="#2b579a" strokeWidth="1.300" /></Office></AppIcon>
      <AppIcon ml="ml-[27px]" dot>
        <svg className="h-[34px] w-[36px]" viewBox="0 0 36 34"><path d="M0 2q0-2 2-2h9l4 4v6H0z" fill="#c9930f" /><path d="M0 6h14l3-3h17q2 0 2 2v27q0 1.500-2 1.500H2Q0 33.500 0 32z" fill="#f5c64a" /><path d="M6 33.500V27q0-4 4-4h16q4 0 4 4v6.500z" fill="#1372c4" /><path d="M11 28.500h14" stroke="#0a4a8a" strokeWidth="1.800" /></svg>
      </AppIcon>
      <AppIcon ml="ml-[28px]"><Office letter="P" color="#d24726" dark="#cb4322"><path d="M23 9a4.500 4.500 0 1 0 4.500 4.500H23zM18 20.500h10M18 23.500h10" fill="none" stroke="#d24726" strokeWidth="1.500" /></Office></AppIcon>
      <AppIcon ml="ml-[28px]"><svg className="h-[34px] w-[34px]" viewBox="0 0 34 34" fill="none" stroke="#111" strokeLinecap="round"><circle cx="17" cy="17" r="17" fill="#1ed05f" stroke="none" /><path d="M7 11.500q11-3.500 20.500 2" strokeWidth="3" /><path d="M8 17.500q9.500-3 17.500 2" strokeWidth="2.600" /><path d="M9 23q8-2.500 14.500 1.500" strokeWidth="2.200" /></svg></AppIcon>
      <AppIcon ml="ml-[29px]" dot><Office letter="X" color="#217346" dark="#1d7044"><path d="M17 10h13M17 14h13M17 18h13M17 22h13M24.500 6v20" stroke="#217346" strokeWidth="1.500" /></Office></AppIcon>
      <AppIcon ml="ml-[29px]" dot><svg className="h-[36px] w-[36px]" viewBox="0 0 36 36"><path d="m0 24 2 2.500q1 1 2.500 0L27 9V0L1 23z" fill="#0f6fb8" /><path d="m0 12 2-2.500q1-1 2.500 0L27 27v9L1 13z" fill="#0e80cf" /><path d="m26 0 9 4.500q1 .5 1 2v23q0 1.500-1 2L26 36z" fill="#2aa0ec" /></svg></AppIcon>
      <svg className="ml-[100px] mt-[30px] h-[10px] w-[17px]" viewBox="0 0 17 10" fill="none" stroke="#eee" strokeWidth="1.800"><path d="m1 9 7.500-7.500L16 9" /></svg>
      <svg className="ml-[26px] mt-[24px] h-[23px] w-[25px]" viewBox="0 0 25 23"><path d="M5 17A5 5 0 0 1 4 7.500 7.500 7.500 0 0 1 18 5q4 1 4 6 0 6-5 6z" fill="#a5a5a5" /><path d="M5 17A5 5 0 0 1 2 9q8-1 12 8z" fill="#e8e8e8" /><circle cx="18" cy="15.500" r="6.800" fill="#fff" /><path d="M14.500 14a3.700 3.700 0 0 1 7-.5M21.500 17a3.700 3.700 0 0 1-7 .5" fill="none" stroke="#1470c4" strokeWidth="1.700" /></svg>
      <div className="ml-[29px] mt-[11px] flex w-[32px] flex-col items-center text-[17px] leading-[24px] text-white"><Fit w={28}>ESP</Fit><Fit w={31}>LAA</Fit></div>
      <svg className="ml-[28px] mt-[24px] h-[20px] w-[25px]" viewBox="0 0 25 20" fill="none" stroke="#eee" strokeWidth="1.900"><path d="M1 7.500q11.500-11 23 0M4.500 11.500q8-8 16 0M8 15q4.500-4.500 9 0" /><circle cx="12.500" cy="17.500" r="1.500" fill="#eee" /></svg>
      <svg className="ml-[11px] mt-[24px] h-[20px] w-[25px]" viewBox="0 0 25 20" fill="none" stroke="#eee" strokeWidth="1.600"><path d="M1 7h4l6-5.500v17L5 13H1z" /><path d="M14 6.500q2.500 3.500 0 7M17 3.500q5 6.500 0 13" /><path d="M20 1.500q6.500 8.500 0 17" stroke="#666" /></svg>
      <svg className="ml-[11px] mt-[21px] h-[22px] w-[26px]" viewBox="0 0 26 22" fill="none" stroke="#eee" strokeWidth="1.700"><path d="M9 4.500h11q2 0 2 2v11q0 2-2 2H4q-2 0-2-2V14" /><path d="M24.500 9v6" strokeWidth="2" /><path d="M4 13h3l3-6h10v10.500H4z" fill="#eee" stroke="none" /><path d="M5.500 0 1 8h3l-1.500 6L8.500 6H5.500L7 0z" fill="#eee" stroke="none" /></svg>
      <div className="ml-[22px] mt-[10px] flex w-[84px] flex-col items-end text-[17px] leading-[24px] text-white"><Fit w={64}>8:04 PM</Fit><Fit w={83}>4/28/2024</Fit></div>
      <svg className="ml-[14px] mt-[22px] h-[24px] w-[21px]" viewBox="0 0 21 24"><path d="M2 18V9.500Q2 2 9.500 2H13v7h6v9l1.500 2H0zM6.500 21h6q-.5 3-3 3t-3-3z" fill="#f0f0f0" /><path d="M7 9.500h4.500L7 15.500h5" fill="none" stroke="#1d1f1f" strokeWidth="1.700" /><path d="M14.500 1.500h4.500l-4.500 6h5" fill="none" stroke="#f0f0f0" strokeWidth="1.500" /></svg>
    </div>
  );
}

export default function App() {
  return (
    <div className="relative flex h-[1080px] w-[1920px] flex-col overflow-hidden bg-[#e6e6e6] font-['Open_Sans',sans-serif]">
      <TitleBar />
      <Tabs />
      <Ribbon />
      <FormulaBar />
      <Sheet />
      <SheetTabs />
      <StatusBar />
      <Taskbar />
      <div className="pointer-events-none absolute left-[1498px] top-[892px] flex flex-col text-[#8c8c8c]/60">
        <Fit w={235} className="text-[28px] leading-[40px]">Activate Windows</Fit>
        <Fit w={341} className="text-[20px] leading-[30px]">Go to Settings to activate Windows.</Fit>
      </div>
    </div>
  );
}
